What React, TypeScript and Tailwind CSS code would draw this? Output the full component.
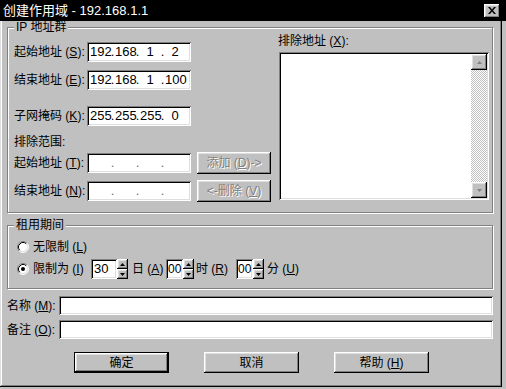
import { Fragment } from 'react';

const raised =
  'bg-[#c0c0c0] shadow-[inset_-1px_-1px_#000,inset_1px_1px_#fff,inset_-2px_-2px_#808080,inset_2px_2px_#dfdfdf]';
const sunken =
  'bg-white shadow-[inset_1px_1px_#808080,inset_-1px_-1px_#fff,inset_2px_2px_#000,inset_-2px_-2px_#dfdfdf]';
const group =
  'm-0 p-0 pl-[4px] border border-[#808080] shadow-[inset_1px_1px_#fff,1px_1px_#fff] min-w-0';

function Key({ k }: { k: string }) {
  return (
    <>
      {' ('}
      <u>{k}</u>
      {')'}
    </>
  );
}

function IpBox({ parts }: { parts?: string[] }) {
  const vals = parts ?? ['', '', '', ''];
  return (
    <div className={`${sunken} w-[104px] h-[20px] flex items-center pl-[3px] text-[13px]`}>
      {vals.map((v, i) => (
        <Fragment key={i}>
          <span className="w-[20px] text-center">{v}</span>
          {i < 3 && <span className={`w-[5px] text-center ${parts ? '' : 'text-[#707070]'}`}>.</span>}
        </Fragment>
      ))}
    </div>
  );
}

function Tri({ up, color = '#000' }: { up?: boolean; color?: string }) {
  return (
    <svg width="5" height="3" viewBox="0 0 5 3">
      <path d={up ? 'M2.5 0L5 3H0Z' : 'M0 0H5L2.5 3Z'} fill={color} />
    </svg>
  );
}

function Spin() {
  return (
    <div className="flex flex-col w-[11px] h-[20px]">
      <div className={`${raised} h-[10px] flex items-center justify-center`}>
        <Tri up />
      </div>
      <div className={`${raised} h-[10px] flex items-center justify-center`}>
        <Tri />
      </div>
    </div>
  );
}

function Radio({ checked }: { checked?: boolean }) {
  return (
    <svg width="12" height="12" viewBox="0 0 12 12" className="shrink-0">
      <circle cx="6" cy="6" r="5" fill="#fff" />
      <path d="M2.11 9.89A5.5 5.5 0 0 1 9.89 2.11" stroke="#808080" fill="none" />
      <path d="M9.89 2.11A5.5 5.5 0 0 1 2.11 9.89" stroke="#fff" fill="none" />
      <path d="M2.82 9.18A4.5 4.5 0 0 1 9.18 2.82" stroke="#000" fill="none" />
      <path d="M9.18 2.82A4.5 4.5 0 0 1 2.82 9.18" stroke="#dfdfdf" fill="none" />
      {checked && <circle cx="6" cy="6" r="2" fill="#000" />}
    </svg>
  );
}

function DisabledBtn({ children }: { children: React.ReactNode }) {
  return (
    <div
      className={`${raised} ml-[6px] w-[74px] h-[22px] flex items-center justify-center text-[#808080] [text-shadow:1px_1px_0_#fff]`}
    >
      {children}
    </div>
  );
}

function Row({ label, children, mt }: { label: React.ReactNode; children: React.ReactNode; mt: string }) {
  return (
    <div className={`flex items-center ${mt}`}>
      <span className="w-[73px] whitespace-nowrap">{label}</span>
      {children}
    </div>
  );
}

export default function App() {
  return (
    <div className="w-[506px] h-[389px] bg-[#c0c0c0] overflow-hidden text-black text-[12px] leading-[14px] font-['Liberation_Sans','Noto_Sans_CJK_SC',sans-serif]">
      {/* title bar */}
      <div className="h-[21px] bg-black flex items-center justify-between pl-[3px] pr-[6px]">
        <span className="text-white text-[13px]">创建作用域 - 192.168.1.1</span>
        <div className={`${raised} w-[16px] h-[14px] flex items-center justify-center`}>
          <svg width="8" height="7" viewBox="0 0 8 7">
            <path d="M0 0h2l2 2.5L6 0h2L5 3.5 8 7H6L4 4.5 2 7H0l3-3.5Z" fill="#000" />
          </svg>
        </div>
      </div>

      <div className="w-[502px] h-[366px] pl-[7px] shadow-[inset_-1px_-1px_#000,inset_1px_0_#dfdfdf,inset_-2px_-2px_#808080,inset_2px_0_#fff]">
        {/* IP address group */}
        <fieldset className={`${group} w-[486px] h-[192px]`}>
          <legend className="ml-[2px] px-[2px] bg-[#c0c0c0] leading-[12px]">IP 地址群</legend>
          <div className="flex items-start ml-[2px] gap-[7px]">
            <div className="flex flex-col">
              <Row label={<>起始地址<Key k="S" />:</>} mt="mt-[9px]">
                <IpBox parts={['192', '168', '1', '2']} />
              </Row>
              <Row label={<>结束地址<Key k="E" />:</>} mt="mt-[8px]">
                <IpBox parts={['192', '168', '1', '100']} />
              </Row>
              <Row label={<>子网掩码<Key k="K" />:</>} mt="mt-[16px]">
                <IpBox parts={['255', '255', '255', '0']} />
              </Row>
              <span className="mt-[9px]">排除范围:</span>
              <Row label={<>起始地址<Key k="T" />:</>} mt="mt-[3px] h-[22px]">
                <IpBox />
                <DisabledBtn>
                  添加<Key k="D" />-&gt;
                </DisabledBtn>
              </Row>
              <Row label={<>结束地址<Key k="N" />:</>} mt="mt-[6px] h-[22px]">
                <IpBox />
                <DisabledBtn>
                  &lt;-删除<Key k="V" />
                </DisabledBtn>
              </Row>
            </div>

            <div className="flex flex-col">
              <span className="mt-[1px]">
                排除地址<Key k="X" />:
              </span>
              <div className={`${sunken} mt-[4px] ml-[1px] w-[210px] h-[148px] flex justify-end p-[2px]`}>
                <div className="w-[16px] flex flex-col">
                  <div className={`${raised} h-[16px] flex items-center justify-center`}>
                    <Tri up color="#808080" />
                  </div>
                  <div className="flex-1 bg-[image:repeating-conic-gradient(#c0c0c0_0%_25%,#fff_0%_50%)] bg-[length:2px_2px]" />
                  <div className={`${raised} h-[16px] flex items-center justify-center`}>
                    <Tri color="#808080" />
                  </div>
                </div>
              </div>
            </div>
          </div>
        </fieldset>

        {/* lease duration group */}
        <fieldset className={`${group} mt-[6px] w-[486px] h-[70px]`}>
          <legend className="ml-[2px] px-[2px] bg-[#c0c0c0] leading-[12px]">租用期间</legend>
          <div className="ml-[5px] mt-[9px] h-[14px] flex items-center gap-[4px]">
            <Radio />
            <span>
              无限制<Key k="L" />
            </span>
          </div>
          <div className="ml-[5px] mt-[5px] h-[20px] flex items-center">
            <Radio checked />
            <span className="ml-[4px] w-[58px] whitespace-nowrap">
              限制为<Key k="I" />
            </span>
            <div className={`${sunken} w-[26px] h-[20px] pl-[3px] flex items-center text-[13px]`}>30</div>
            <Spin />
            <span className="ml-[4px] w-[34px] whitespace-nowrap">
              日<Key k="A" />
            </span>
            <div className={`${sunken} w-[17px] h-[20px] pl-[2px] flex items-center`}>00</div>
            <Spin />
            <span className="ml-[2px] w-[40px] whitespace-nowrap">
              时<Key k="R" />
            </span>
            <div className={`${sunken} w-[17px] h-[20px] pl-[2px] flex items-center`}>00</div>
            <Spin />
            <span className="ml-[3px] whitespace-nowrap">
              分<Key k="U" />
            </span>
          </div>
        </fieldset>

        {/* name / comment */}
        <div className="mt-[7px] h-[19px] flex items-center">
          <span className="w-[52px] whitespace-nowrap">
            名称<Key k="M" />:
          </span>
          <div className={`${sunken} w-[434px] h-[19px]`} />
        </div>
        <div className="mt-[5px] h-[19px] flex items-center">
          <span className="w-[52px] whitespace-nowrap">
            备注<Key k="O" />:
          </span>
          <div className={`${sunken} w-[434px] h-[19px]`} />
        </div>

        {/* buttons */}
        <div className="mt-[13px] ml-[67px] flex gap-[35px]">
          <div className={`${raised} border border-black w-[95px] h-[21px] flex items-center justify-center`}>确定</div>
          <div className={`${raised} w-[95px] h-[21px] flex items-center justify-center`}>取消</div>
          <div className={`${raised} w-[95px] h-[21px] flex items-center justify-center`}>
            帮助<Key k="H" />
          </div>
        </div>
      </div>
    </div>
  );
}
